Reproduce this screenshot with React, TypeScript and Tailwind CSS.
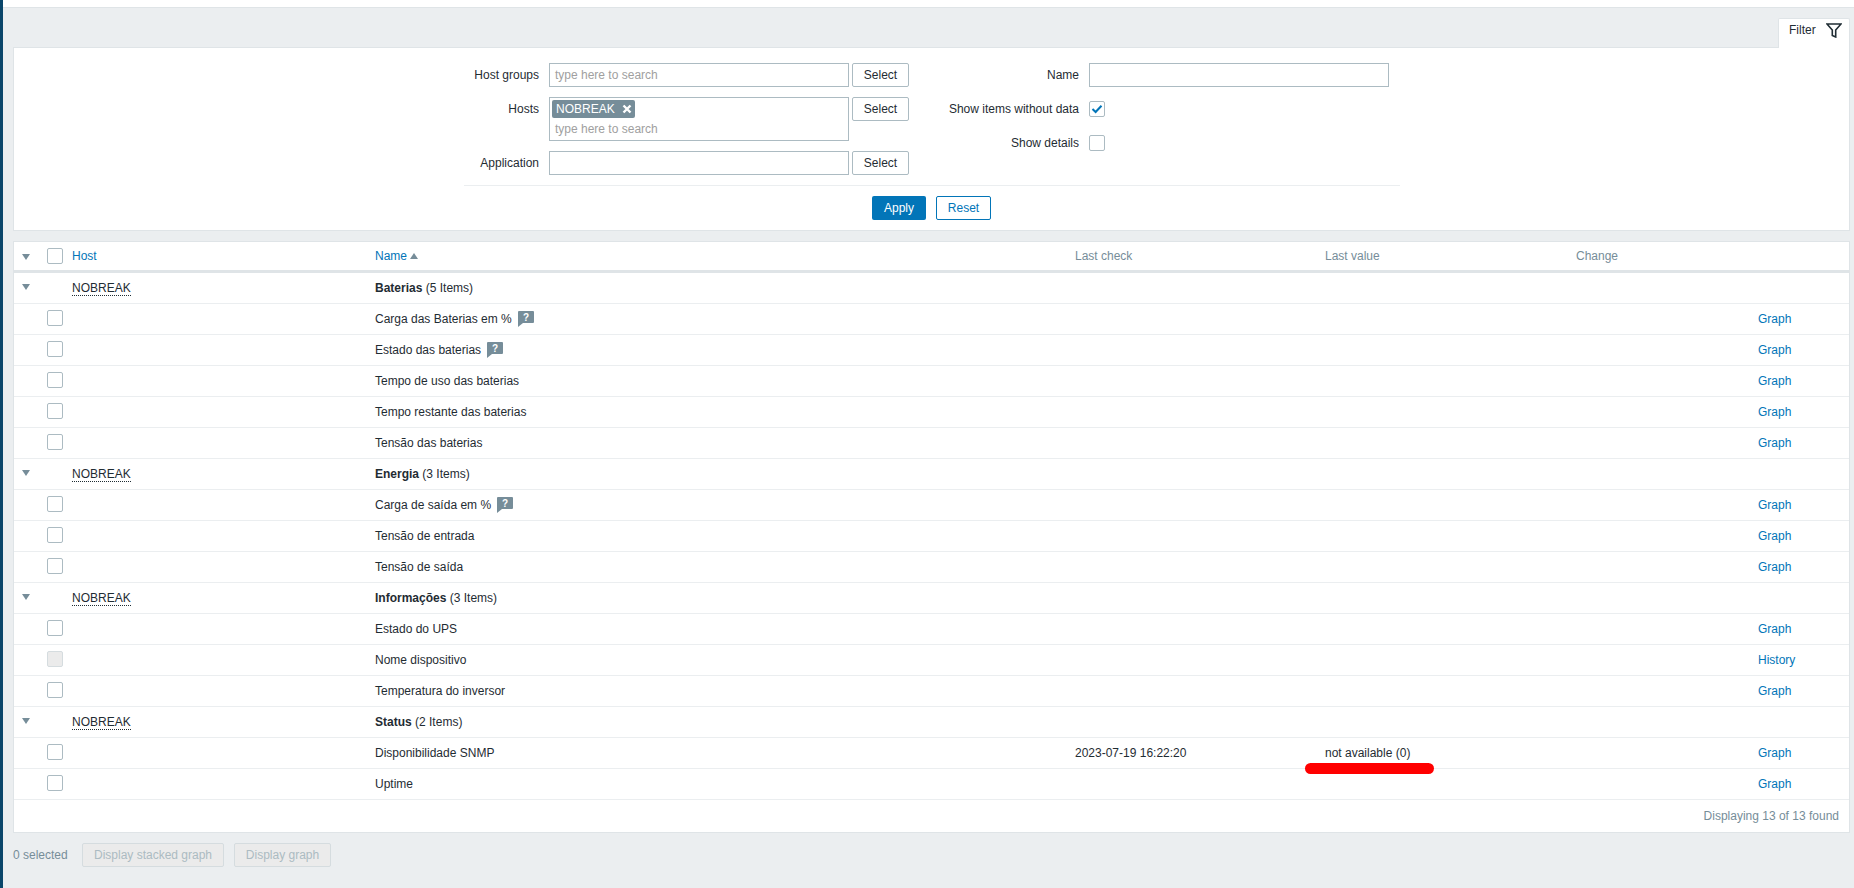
import { Fragment } from 'react'

const rowGrid = 'grid grid-cols-[33px_25px_303px_700px_250px_251px_182px_1fr] items-center'

const groups = [
  {
    name: 'Baterias',
    count: '5 Items',
    items: [
      { name: 'Carga das Baterias em %', hint: true },
      { name: 'Estado das baterias', hint: true },
      { name: 'Tempo de uso das baterias' },
      { name: 'Tempo restante das baterias' },
      { name: 'Tensão das baterias' },
    ],
  },
  {
    name: 'Energia',
    count: '3 Items',
    items: [
      { name: 'Carga de saída em %', hint: true },
      { name: 'Tensão de entrada' },
      { name: 'Tensão de saída' },
    ],
  },
  {
    name: 'Informações',
    count: '3 Items',
    items: [
      { name: 'Estado do UPS' },
      { name: 'Nome dispositivo', disabled: true, action: 'History' },
      { name: 'Temperatura do inversor' },
    ],
  },
  {
    name: 'Status',
    count: '2 Items',
    items: [
      { name: 'Disponibilidade SNMP', lastCheck: '2023-07-19 16:22:20', lastValue: 'not available (0)', mark: true },
      { name: 'Uptime' },
    ],
  },
]

function Checkbox({ disabled, checked, className = '' }: { disabled?: boolean; checked?: boolean; className?: string }) {
  return (
    <span
      className={`flex h-4 w-4 items-center justify-center rounded-[2px] border ${
        disabled ? 'border-[#d5dcdf] bg-[#ebebeb]' : 'border-[#acbbc2] bg-white'
      } ${className}`}
    >
      {checked && (
        <svg width="12" height="12" viewBox="0 0 12 12" fill="none" stroke="#0275b8" strokeWidth="2">
          <path d="M1.5 6 4.6 9 10.5 2.8" />
        </svg>
      )}
    </span>
  )
}

function Arrow({ className = '' }: { className?: string }) {
  return (
    <span className={`ml-[8px] block h-0 w-0 border-x-[4px] border-t-[6px] border-x-transparent border-t-[#768d99] ${className}`} />
  )
}

function Hint() {
  return (
    <svg width="16" height="16" viewBox="0 0 16 16" className="ml-[6px] shrink-0">
      <path d="M1 0h14a1 1 0 0 1 1 1v10a1 1 0 0 1-1 1H5l-5 4V1a1 1 0 0 1 1-1z" fill="#768d99" />
      <text x="8" y="9.5" textAnchor="middle" fontSize="10" fontWeight="700" fill="#fff" fontFamily="Liberation Sans">?</text>
    </svg>
  )
}

function SelectButton() {
  return (
    <button className="ml-[3px] h-6 w-[57px] shrink-0 rounded-[2px] border border-[#acbbc2] bg-white text-[#1f2c33]">Select</button>
  )
}

export default function App() {
  return (
    <div className="flex h-[888px] w-full overflow-hidden bg-[#ebeef0] font-['Liberation_Sans',Arial,sans-serif] text-[12px] text-[#1f2c33]">
      <div className="w-[3px] shrink-0 bg-[#0a466a]" />
      <div className="min-w-0 flex-1">
        <div className="h-2 border-b border-[#dfe4e7] bg-white" />

        <div className="mt-[10px] ml-[10px] mr-[4px]">
          <div className="flex justify-end">
            <div className="relative z-10 -mb-px flex h-[30px] w-[72px] items-center rounded-t-[2px] border border-b-0 border-[#dfe4e7] bg-white pb-[7px] pl-[10px]">
              <span>Filter</span>
              <svg width="16" height="15" viewBox="0 0 16 15" fill="none" stroke="#1f2c33" strokeWidth="1.6" className="ml-[10px] shrink-0">
                <path d="M1 1h14L9.7 7v7L6.3 12.5V7L1 1z" />
              </svg>
            </div>
          </div>

          {/* filtro */}
          <div className="h-[184px] border border-[#dfe4e7] bg-white pt-[15px]">
            <div className="flex">
              <div className="w-[895px] shrink-0">
                <div className="flex h-[24px] items-center">
                  <label className="w-[535px] shrink-0 pr-[10px] text-right">Host groups</label>
                  <div className="flex h-6 w-[300px] shrink-0 items-center border border-[#acbbc2] px-[5px] text-[#a0a0a0]">type here to search</div>
                  <SelectButton />
                </div>
                <div className="mt-[10px] flex items-start">
                  <label className="flex h-6 w-[535px] shrink-0 items-center justify-end pr-[10px]">Hosts</label>
                  <div className="h-[44px] w-[300px] shrink-0 border border-[#acbbc2] px-[2px] pt-[2px]">
                    <span className="flex h-[18px] w-[83px] items-center rounded-[2px] bg-[#768d99] pl-[4px] text-white">
                      NOBREAK
                      <svg width="10" height="10" viewBox="0 0 10 10" stroke="#fff" strokeWidth="2.4" className="ml-[7px]">
                        <path d="M1.5 1.5 8.5 8.5M8.5 1.5 1.5 8.5" />
                      </svg>
                    </span>
                    <div className="mt-[2px] pl-[3px] text-[#a0a0a0]">type here to search</div>
                  </div>
                  <SelectButton />
                </div>
                <div className="mt-[10px] flex h-[24px] items-center">
                  <label className="w-[535px] shrink-0 pr-[10px] text-right">Application</label>
                  <div className="h-6 w-[300px] shrink-0 border border-[#acbbc2]" />
                  <SelectButton />
                </div>
              </div>
              <div className="flex-1 pl-[25px]">
                <div className="flex h-[24px] items-center">
                  <label className="w-[155px] shrink-0 pr-[10px] text-right">Name</label>
                  <div className="h-6 w-[300px] border border-[#acbbc2]" />
                </div>
                <div className="mt-[10px] flex h-[24px] items-center">
                  <label className="w-[155px] shrink-0 pr-[10px] text-right">Show items without data</label>
                  <Checkbox checked />
                </div>
                <div className="mt-[10px] flex h-[24px] items-center">
                  <label className="w-[155px] shrink-0 pr-[10px] text-right">Show details</label>
                  <Checkbox />
                </div>
              </div>
            </div>
            <div className="ml-[450px] mr-[449px] mt-[10px] border-t border-[#ebeef0]" />
            <div className="mt-[10px] flex justify-center gap-[10px]">
              <button className="h-6 w-[54px] rounded-[2px] bg-[#0275b8] text-white">Apply</button>
              <button className="h-6 w-[55px] rounded-[2px] border border-[#0275b8] bg-white text-[#0275b8]">Reset</button>
            </div>
          </div>

          {/* tabela */}
          <div className="mt-[10px] border border-[#dfe4e7] bg-white">
            <div className={`${rowGrid} h-[31px] border-b-[3px] border-[#dfe4e7] pb-px text-[#768d99]`}>
              <Arrow className="mt-[3px]" />
              <Checkbox />
              <a className="text-[#0275b8]">Host</a>
              <span className="flex items-center text-[#0275b8]">
                Name
                <span className="ml-[3px] block h-0 w-0 border-x-[4px] border-b-[6px] border-x-transparent border-b-[#768d99]" />
              </span>
              <span>Last check</span>
              <span>Last value</span>
              <span>Change</span>
              <span />
            </div>
            {groups.map((group) => (
              <Fragment key={group.name}>
                <div className={`${rowGrid} h-[31px] border-b border-[#ebeef0]`}>
                  <Arrow className="mb-[2px]" />
                  <span />
                  <span>
                    <span className="border-b border-dotted border-[#1f2c33]">NOBREAK</span>
                  </span>
                  <span>
                    <b>{group.name}</b> ({group.count})
                  </span>
                </div>
                {group.items.map((item) => (
                  <div key={item.name} className={`${rowGrid} relative h-[31px] border-b border-[#ebeef0]`}>
                    <span />
                    <Checkbox disabled={item.disabled} className="mb-[2px]" />
                    <span />
                    <span className="flex items-center">
                      {item.name}
                      {item.hint && <Hint />}
                    </span>
                    <span>{item.lastCheck}</span>
                    <span>{item.lastValue}</span>
                    <span />
                    <a className="text-[#0275b8]">{item.action ?? 'Graph'}</a>
                    {item.mark && (
                      <span className="absolute left-[1291px] top-[25px] z-10 h-[11px] w-[129px] rounded-full bg-[#ff0000]" />
                    )}
                  </div>
                ))}
              </Fragment>
            ))}
            <div className="flex h-[32px] items-center justify-end pr-[10px] text-[#768d99]">Displaying 13 of 13 found</div>
          </div>

          <div className="mt-[10px] flex items-center">
            <span className="w-[69px] text-[#768d99]">0 selected</span>
            <button className="h-6 w-[142px] rounded-[2px] border border-[#d5dcdf] bg-[#ebebeb] text-[#acbbc2]">Display stacked graph</button>
            <button className="ml-[10px] h-6 w-[97px] rounded-[2px] border border-[#d5dcdf] bg-[#ebebeb] text-[#acbbc2]">Display graph</button>
          </div>
        </div>
      </div>
    </div>
  )
}
